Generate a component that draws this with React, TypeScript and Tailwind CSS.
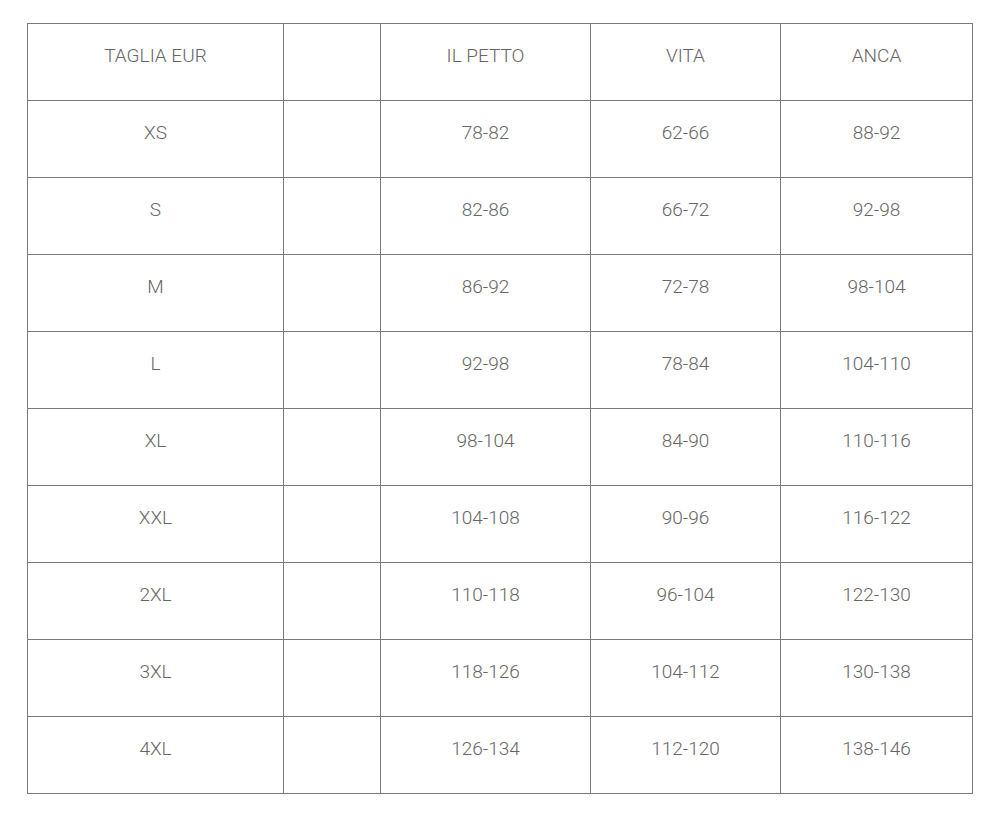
const header = ['TAGLIA EUR', '', 'IL PETTO', 'VITA', 'ANCA'];

const rows = [
  ['XS', '78-82', '62-66', '88-92'],
  ['S', '82-86', '66-72', '92-98'],
  ['M', '86-92', '72-78', '98-104'],
  ['L', '92-98', '78-84', '104-110'],
  ['XL', '98-104', '84-90', '110-116'],
  ['XXL', '104-108', '90-96', '116-122'],
  ['2XL', '110-118', '96-104', '122-130'],
  ['3XL', '118-126', '104-112', '130-138'],
  ['4XL', '126-134', '112-120', '138-146'],
];

const widths = ['w-[256px]', 'w-[97px]', 'w-[210px]', 'w-[190px]', 'w-[192px]'];

const cell =
  'h-[77px] border border-[#7a7a7a] p-0 pt-[18px] align-top text-center text-[19px] leading-[27px] font-light text-[#666]';

export default function App() {
  return (
    <div className="min-h-screen bg-white pl-[27px] pt-[23px] font-['Roboto',sans-serif]">
      <table className="table-fixed border-collapse">
        <thead>
          <tr>
            {header.map((h, i) => (
              <th key={i} className={`${cell} ${widths[i]}`}>
                {h}
              </th>
            ))}
          </tr>
        </thead>
        <tbody>
          {rows.map((r) => (
            <tr key={r[0]}>
              <td className={cell}>{r[0]}</td>
              <td className={cell}></td>
              <td className={cell}>{r[1]}</td>
              <td className={cell}>{r[2]}</td>
              <td className={cell}>{r[3]}</td>
            </tr>
          ))}
        </tbody>
      </table>
    </div>
  );
}
